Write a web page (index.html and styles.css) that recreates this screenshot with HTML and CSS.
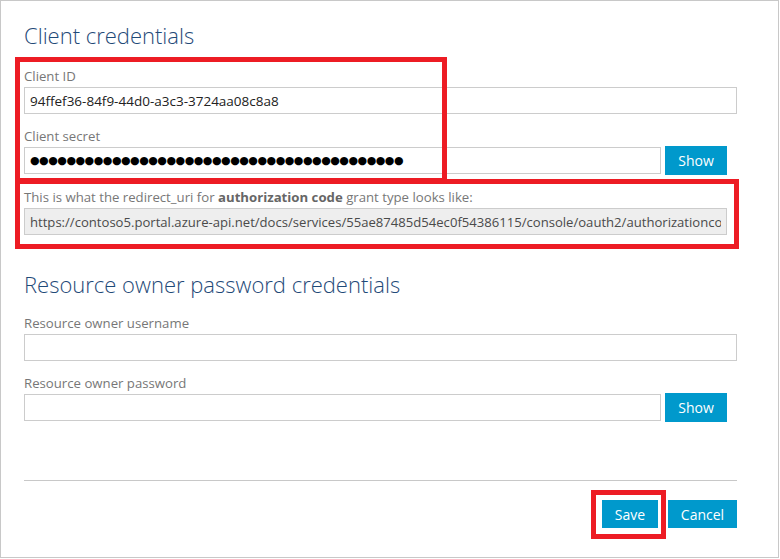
FILE: index.html
```html
<!DOCTYPE html>
<html lang="en">
<head>
<meta charset="utf-8">
<title>Client credentials</title>
<link rel="stylesheet" href="styles.css">
</head>
<body>
<div class="frame">
  <div class="panel">
    <h2 class="title">Client credentials</h2>
    <div class="field">
      <label class="label">Client ID</label>
      <input class="inp" type="text" value="94ffef36-84f9-44d0-a3c3-3724aa08c8a8">
    </div>
    <div class="field">
      <label class="label">Client secret</label>
      <div class="row">
        <input class="inp short dots" type="text" value="●●●●●●●●●●●●●●●●●●●●●●●●●●●●●●●●●●●●●●●●●">
        <button class="btn show">Show</button>
      </div>
    </div>
    <div class="field">
      <p class="label">This is what the redirect_uri for <b>authorization code</b> grant type looks like:</p>
      <input class="inp ro" type="text" readonly value="https://contoso5.portal.azure-api.net/docs/services/55ae87485d54ec0f54386115/console/oauth2/authorizationcode/callback">
    </div>

    <h2 class="title second">Resource owner password credentials</h2>
    <div class="field">
      <label class="label">Resource owner username</label>
      <input class="inp" type="text" value="">
    </div>
    <div class="field">
      <label class="label">Resource owner password</label>
      <div class="row">
        <input class="inp short" type="password" value="">
        <button class="btn show">Show</button>
      </div>
    </div>

    <hr class="sep">
    <div class="actions">
      <button class="btn save">Save</button>
      <button class="btn cancel">Cancel</button>
    </div>
  </div>

  <div class="mark mark-client"></div>
  <div class="mark mark-redirect"></div>
  <div class="mark mark-save"></div>
</div>
</body>
</html>
```

FILE: styles.css
```css
* { box-sizing: border-box; }

html, body {
  margin: 0;
  padding: 0;
  background: #ffffff;
}

body {
  font-family: "Open Sans", "Noto Sans", "Liberation Sans", sans-serif;
  color: #222222;
}

.frame {
  position: relative;
  width: 779px;
  height: 558px;
  border: 1px solid #c8c8c8;
  background: #ffffff;
}

.panel {
  width: 737px;
  padding: 19px 0 0 23px;
  display: flex;
  flex-direction: column;
}

.title {
  margin: 0;
  font-size: 22px;
  line-height: 30px;
  font-weight: 300;
  color: #1f4a78;
}

.title.second {
  margin-top: 34px;
}

.field {
  display: flex;
  flex-direction: column;
  margin-top: 13px;
}

.title + .field {
  margin-top: 17px;
}

.title.second + .field {
  margin-top: 15px;
}

.label {
  margin: 0 0 2px 0;
  font-size: 13.2px;
  line-height: 18px;
  color: #777777;
}

.label b {
  font-weight: 700;
  color: #666666;
}

.inp {
  width: 713px;
  height: 27px;
  margin: 0;
  padding: 0 5px;
  border: 1px solid #cccccc;
  font-family: inherit;
  font-size: 13.5px;
  color: #222222;
  background: #ffffff;
  outline: none;
}

.inp.short {
  width: 637px;
}

.inp.dots {
  font-family: "DejaVu Sans", sans-serif;
  font-size: 11px;
  letter-spacing: -0.5px;
  color: #000000;
}

.inp.ro {
  width: 703px;
  font-size: 13.1px;
  background: #eeeeee;
  color: #4a4a4a;
}

.row {
  display: flex;
  align-items: center;
  gap: 4px;
  height: 29px;
  margin-top: -1px;
}

.btn {
  margin: 0;
  border: none;
  background: #0099cc;
  color: #ffffff;
  font-family: inherit;
  font-size: 14px;
  padding: 0;
  cursor: pointer;
}

.btn.show {
  width: 62px;
  height: 29px;
}

.sep {
  width: 713px;
  margin: 58px 0 0 0;
  border: none;
  border-top: 1px solid #c8c8c8;
  height: 0;
}

.actions {
  display: flex;
  justify-content: flex-end;
  gap: 10px;
  width: 713px;
  margin-top: 19px;
}

.btn.save {
  width: 56px;
  height: 28px;
}

.btn.cancel {
  width: 69px;
  height: 28px;
}

.mark {
  position: absolute;
  border: 5px solid #ed1c24;
  pointer-events: none;
}

.mark-client {
  left: 14px;
  top: 56px;
  width: 432px;
  height: 126px;
}

.mark-redirect {
  left: 14px;
  top: 178px;
  width: 724px;
  height: 70px;
}

.mark-save {
  left: 590px;
  top: 489px;
  width: 75px;
  height: 49px;
}
```
